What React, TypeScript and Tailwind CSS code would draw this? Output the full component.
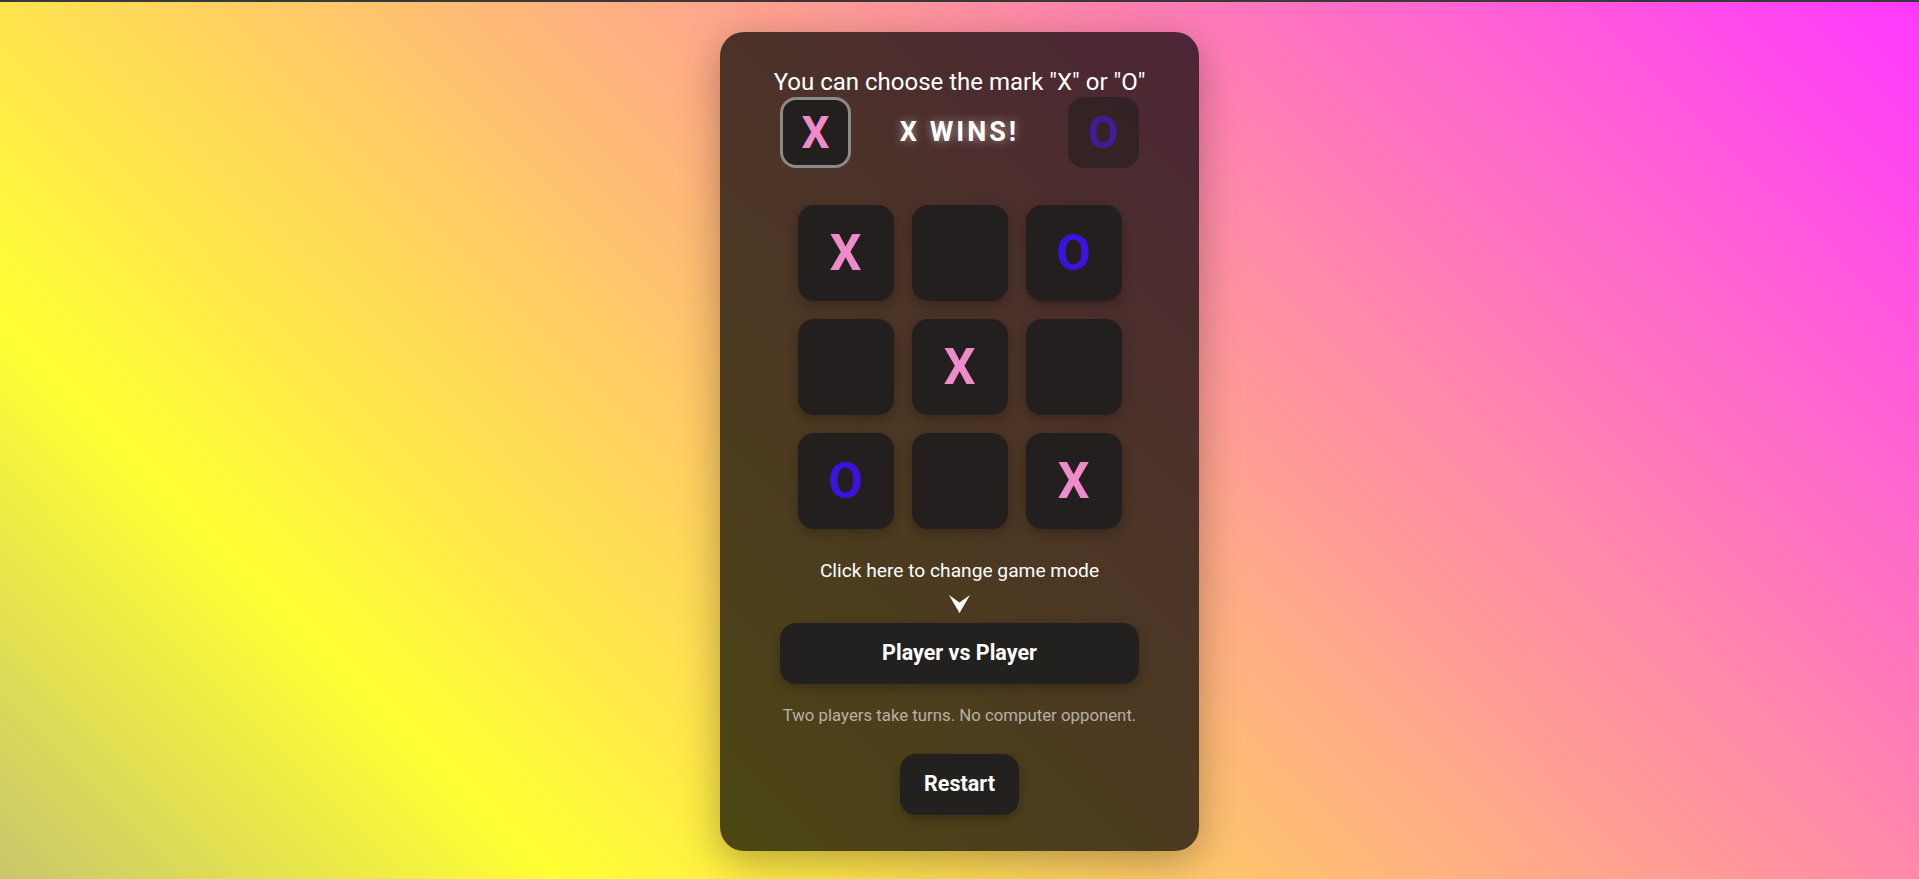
import React from "react";

type Mark = "X" | "O" | null;

const BOARD: Mark[] = ["X", null, "O", null, "X", null, "O", null, "X"];

function MarkGlyph({ mark, size }: { mark: Mark; size: string }) {
  if (!mark) return null;
  return (
    <span className={`${size} font-bold leading-none ${mark === "X" ? "text-[#f08bc9]" : "text-[#3b12de]"}`}>
      {mark}
    </span>
  );
}

function DownArrow() {
  return (
    <svg width="21" height="18" viewBox="0 0 21 18" className="block">
      <path d="M0 0 L10.5 7.5 L21 0 L10.5 18 Z" fill="#ffffff" />
    </svg>
  );
}

export default function App() {
  return (
    <div className="h-screen w-full border-t-2 border-[#3b3838] bg-[linear-gradient(45deg,#c9c66c_0%,#ffff33_20%,#ffc26f_45%,#ff8aa8_68%,#ff38ff_100%)] flex items-start justify-center pt-[30px] font-['Roboto',sans-serif]">
      <div className="w-[479px] h-[819px] rounded-3xl bg-black/70 shadow-[0_10px_40px_rgba(0,0,0,0.3)] px-[60px] pt-[36px] flex flex-col items-center text-white">
        <h1 className="text-[24px] leading-[29px] font-normal text-white whitespace-nowrap">
          You can choose the mark "X" or "O"
        </h1>

        {/* mark picker + status */}
        <div className="w-full flex items-center justify-between">
          <button className="w-[71px] h-[71px] rounded-2xl bg-[#231f1e] border-[3px] border-[#8c8987] flex items-center justify-center">
            <MarkGlyph mark="X" size="text-[44px]" />
          </button>
          <p className="text-[27px] font-bold tracking-[3px] [text-shadow:0_0_10px_rgba(255,255,255,0.5)]">X WINS!</p>
          <button className="w-[71px] h-[71px] rounded-2xl bg-[#231f1e] border-[3px] border-transparent opacity-60 flex items-center justify-center">
            <MarkGlyph mark="O" size="text-[44px]" />
          </button>
        </div>

        {/* board */}
        <div className="mt-[37px] grid grid-cols-[repeat(3,96px)] gap-[18px]">
          {BOARD.map((m, i) => (
            <div
              key={i}
              className="w-[96px] h-[96px] rounded-2xl bg-[#231f1e] shadow-[0_4px_12px_rgba(0,0,0,0.25)] flex items-center justify-center"
            >
              <MarkGlyph mark={m} size="text-[50px]" />
            </div>
          ))}
        </div>

        <p className="mt-[29px] text-[19.2px] leading-[25px] whitespace-nowrap">Click here to change game mode</p>
        <div className="mt-[12px]">
          <DownArrow />
        </div>
        <button className="mt-[10px] w-full h-[61px] rounded-2xl bg-[#232120] shadow-[0_4px_12px_rgba(0,0,0,0.25)] text-[21.5px] font-bold text-white">
          Player vs Player
        </button>
        <p className="mt-[19px] text-[16.8px] leading-[24px] text-white/60 whitespace-nowrap">
          Two players take turns. No computer opponent.
        </p>
        <button className="mt-[27px] w-[119px] h-[61px] rounded-2xl bg-[#232120] shadow-[0_4px_12px_rgba(0,0,0,0.25)] text-[21.5px] font-bold text-white">
          Restart
        </button>
      </div>
    </div>
  );
}
